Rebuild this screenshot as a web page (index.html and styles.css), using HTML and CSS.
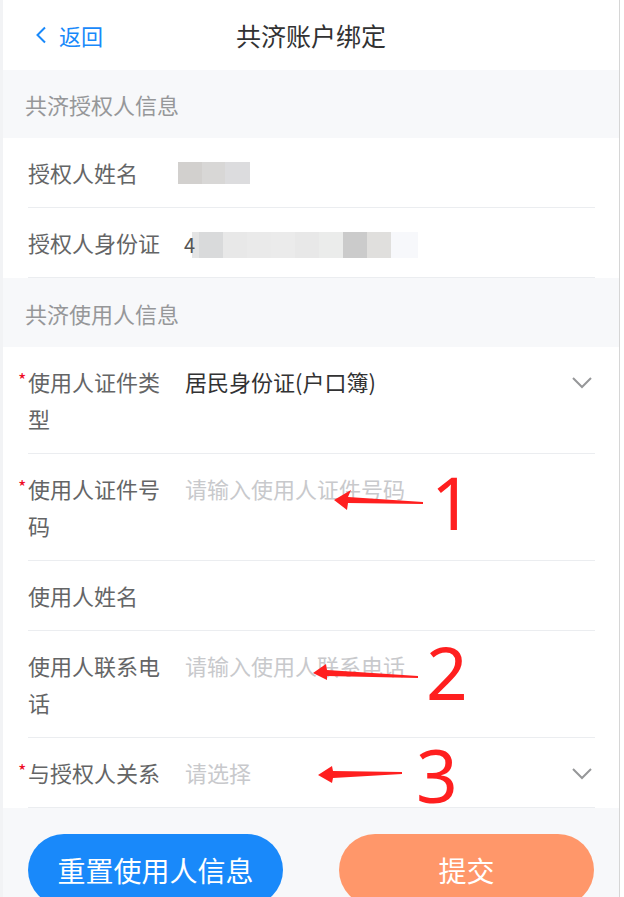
FILE: index.html
```html
<!DOCTYPE html>
<html lang="zh-CN">
  <head>
    <meta charset="UTF-8" />
    <meta name="viewport" content="width=device-width, initial-scale=1.0" />
    <title>共济账户绑定</title>
    <link rel="stylesheet" href="styles.css">
  </head>
  <body>
    <div class="frame">
      <div class="page">
        <div class="navBar">
          <a class="back" href="#">
            <svg width="12" height="18" viewBox="0 0 12 18"><path d="M10 1.5 L2.5 9 L10 16.5" fill="none" stroke="#1989fa" stroke-width="2" /></svg>
            返回
          </a>
          <div class="title">共济账户绑定</div>
          <div></div>
        </div>

        <div class="groupTitle">共济授权人信息</div>
        <div class="cell">
          <div class="label">授权人姓名</div>
          <div class="value"><span class="maskName"></span></div>
        </div>
        <div class="cell">
          <div class="label">授权人身份证</div>
          <div class="value"><span class="maskId">4</span></div>
        </div>

        <div class="groupTitle second">共济使用人信息</div>
        <div class="cell">
          <div class="label required">使用人证件类型</div>
          <div class="value">居民身份证(户口簿)</div>
          <svg class="arrowDown" width="20" height="12" viewBox="0 0 20 12"><path d="M1 1 L10 10 L19 1" fill="none" stroke="#969799" stroke-width="2" /></svg>
        </div>
        <div class="cell">
          <div class="label required">使用人证件号码</div>
          <input class="value" type="text" placeholder="请输入使用人证件号码" />
        </div>
        <div class="cell">
          <div class="label">使用人姓名</div>
          <div class="value"></div>
        </div>
        <div class="cell">
          <div class="label">使用人联系电话</div>
          <input class="value" type="text" placeholder="请输入使用人联系电话" />
        </div>
        <div class="cell">
          <div class="label required">与授权人关系</div>
          <div class="value placeholder">请选择</div>
          <svg class="arrowDown" width="20" height="12" viewBox="0 0 20 12"><path d="M1 1 L10 10 L19 1" fill="none" stroke="#969799" stroke-width="2" /></svg>
        </div>

        <div class="footer">
          <button class="btn btnReset">重置使用人信息</button>
          <button class="btn btnSubmit">提交</button>
        </div>
      </div>

      <!-- red marks drawn over the screenshot -->
      <svg class="marks" width="624" height="897" viewBox="0 0 624 897">
        <polygon points="334,500 351,490 348,497 423,502 423,504 348,503 347,510" />
        <polygon points="313,673 326,664 327,670 418,676 418,678 327,676 327,680" />
        <polygon points="318,775 332,766 333,771 402,772 402,774 333,778 332,783" />
        <text x="452" y="530">1</text>
        <text x="447" y="700">2</text>
        <text x="437" y="803">3</text>
      </svg>
    </div>
  </body>
</html>
```

FILE: styles.css
```css
* {
  margin: 0;
  padding: 0;
  box-sizing: border-box;
}
body {
  background-color: #fff;
  font-family: "Noto Sans CJK SC", "Noto Sans", sans-serif;
}
a {
  text-decoration: none;
}
.frame {
  position: relative;
  width: 624px;
  height: 897px;
  overflow: hidden;
}
.page {
  width: 620px;
  border-left: 3px solid #f2f3f5;
  border-right: 1px solid #d6d6d6;
  min-height: 897px;
  background-color: #f7f8fa;
}
.navBar {
  height: 70px;
  background-color: #fff;
  display: grid;
  grid-template-columns: 1fr auto 1fr;
  align-items: center;
}
.back {
  display: flex;
  align-items: center;
  gap: 12px;
  padding-left: 32px;
  color: #1989fa;
  font-size: 22px;
}
.title {
  font-size: 25px;
  color: #323233;
}
.groupTitle {
  height: 68px;
  line-height: 68px;
  padding-left: 22px;
  font-size: 22px;
  color: #969799;
}
.groupTitle.second {
  height: 69px;
  line-height: 71px;
}
.cell {
  display: flex;
  align-items: flex-start;
  padding: 16px 27px 17px 25px;
  background-color: #fff;
  font-size: 22px;
  line-height: 37px;
  position: relative;
}
.cell::after {
  content: "";
  position: absolute;
  left: 25px;
  right: 24px;
  bottom: 0;
  border-bottom: 1px solid #ebedf0;
}
.label {
  width: 144px;
  margin-right: 13px;
  color: #646566;
  position: relative;
  flex-shrink: 0;
  min-height: 37px;
}
.required::before {
  content: "*";
  position: absolute;
  left: -10px;
  top: -2px;
  font-size: 18px;
  color: #ee0a24;
}
.value {
  flex: 1;
  color: #323233;
  min-height: 37px;
}
input.value {
  border: none;
  outline: none;
  font: inherit;
  height: 37px;
  line-height: 37px;
  background: transparent;
}
input.value::placeholder,
.placeholder {
  color: #c8c9cc;
}
.arrowDown {
  margin-top: 14px;
}
.maskName {
  display: inline-block;
  width: 72px;
  height: 22px;
  margin-left: -7px;
  margin-top: 8px;
  background: linear-gradient(to right, #d2d0ce 0 24px, #d8d7d6 24px 47px, #dcdcde 47px);
  vertical-align: top;
}
.maskId {
  display: inline-block;
  width: 235px;
  height: 26px;
  margin-top: 8px;
  margin-left: -2px;
  padding-left: 1px;
  font-size: 20px;
  line-height: 26px;
  color: #555;
  background: linear-gradient(to right, transparent 0 9px, #e4e4e4 9px 16px, #d9dadb 16px 40px, #e8e8e8 40px 64px, #eaeaea 64px 88px, #ebebeb 88px 112px, #e8e8e8 112px 136px, #ebeceb 136px 160px, #cbcbcb 160px 184px, #e0dfdd 184px 208px, #f7f8fb 208px);
  vertical-align: top;
}
.footer {
  display: flex;
  justify-content: space-between;
  padding: 26px 25px 0 25px;
}
.btn {
  width: 255px;
  height: 72px;
  border: none;
  border-radius: 36px;
  color: #fff;
  font-family: inherit;
  font-size: 28px;
}
.btnReset {
  background-color: #1989fa;
}
.btnSubmit {
  background-color: #ff976a;
}
.marks {
  position: absolute;
  left: 0;
  top: 0;
  pointer-events: none;
}
.marks polygon {
  fill: #ff1f1f;
}
.marks text {
  fill: #ff1f1f;
  font-family: "Noto Sans", sans-serif;
  font-size: 73px;
  text-anchor: middle;
}
```
